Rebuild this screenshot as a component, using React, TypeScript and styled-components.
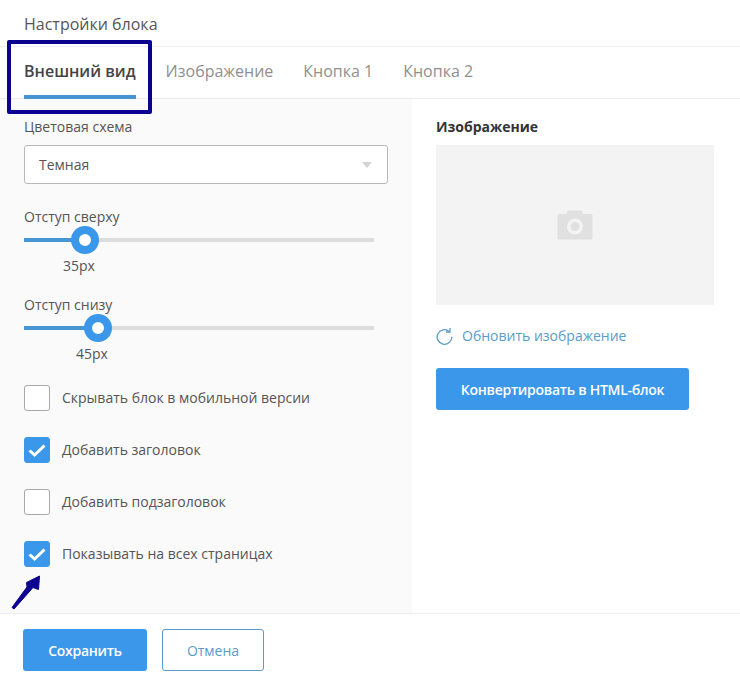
import React from 'react'
import styled, { createGlobalStyle } from 'styled-components'

const GlobalStyle = createGlobalStyle`
  html, body {
    margin: 0;
    padding: 0;
    background: #ffffff;
  }
  body {
    font-family: "Open Sans", "Liberation Sans", sans-serif;
    font-size: 14px;
    color: #555555;
  }
  * {
    box-sizing: border-box;
  }
`

const Page = styled.div`
  position: relative;
  width: 740px;
  height: 674px;
  display: flex;
  flex-direction: column;
  overflow: hidden;
  background: #ffffff;
`

const Header = styled.div`
  height: 47px;
  padding: 13px 24px 0;
  font-size: 16px;
  line-height: 22px;
  color: #555555;
  border-bottom: 1px solid #f0f0f0;
`

const Tabs = styled.div`
  height: 52px;
  display: flex;
  padding-left: 24px;
  gap: 30px;
  border-bottom: 1px solid #ececec;
`

const Tab = styled.div<{ $active?: boolean }>`
  height: 52px;
  padding-top: 13px;
  font-size: 16px;
  line-height: 22px;
  font-weight: ${({ $active }) => ($active ? 600 : 400)};
  color: ${({ $active }) => ($active ? '#444444' : '#8f8f8f')};
  border-bottom: 4px solid ${({ $active }) => ($active ? '#4596d2' : 'transparent')};
`

const Body = styled.div`
  flex: 1;
  display: flex;
  min-height: 0;
`

const LeftColumn = styled.div`
  width: 412px;
  padding: 18px 24px 0;
  background: #fafafa;
`

const RightColumn = styled.div`
  flex: 1;
  padding: 18px 26px 0 24px;
  display: flex;
  flex-direction: column;
  align-items: flex-start;
`

const FieldLabel = styled.div`
  font-size: 14px;
  line-height: 20px;
  color: #555555;
`

const SelectBox = styled.div`
  margin-top: 8px;
  width: 364px;
  height: 39px;
  padding: 0 14px;
  display: flex;
  align-items: center;
  justify-content: space-between;
  background: #ffffff;
  border: 1px solid #b8b8b8;
  border-radius: 3px;
  color: #555555;
`

const Caret = styled.div`
  width: 0;
  height: 0;
  margin-right: 1px;
  border-left: 5.5px solid transparent;
  border-right: 5.5px solid transparent;
  border-top: 6px solid #d4d4d4;
`

const SliderBlock = styled.div`
  margin-top: 23px;
  height: 68px;
  & + & {
    margin-top: 20px;
  }
`

const Track = styled.div`
  position: relative;
  margin-top: 11px;
  width: 350px;
  height: 4px;
  background: #dcdcdc;
`

const TrackFill = styled.div`
  height: 100%;
  background: #4596d2;
`

const Thumb = styled.div`
  position: absolute;
  top: -12px;
  width: 28px;
  height: 28px;
  margin-left: -14px;
  border-radius: 50%;
  background: #ffffff;
  border: 8px solid #3a97ea;
`

const SliderValue = styled.div`
  margin-top: 14px;
  width: 32px;
  text-align: center;
  line-height: 20px;
  white-space: nowrap;
`

const CheckList = styled.div`
  margin-top: 22px;
  display: flex;
  flex-direction: column;
  gap: 26px;
`

const CheckRow = styled.div`
  display: flex;
  align-items: center;
  gap: 12px;
  height: 26px;
  line-height: 20px;
  color: #555555;
`

const CheckBox = styled.div<{ $checked?: boolean }>`
  width: 26px;
  height: 26px;
  display: flex;
  align-items: center;
  justify-content: center;
  border-radius: 3px;
  background: ${({ $checked }) => ($checked ? '#3a97ea' : '#ffffff')};
  border: 1px solid ${({ $checked }) => ($checked ? '#3a97ea' : '#a8a8a8')};
`

const SectionTitle = styled.div`
  font-size: 14px;
  line-height: 20px;
  font-weight: 700;
  color: #333333;
`

const ImagePlaceholder = styled.div`
  margin-top: 8px;
  width: 278px;
  height: 160px;
  display: flex;
  align-items: center;
  justify-content: center;
  background: #f3f3f3;
`

const RefreshLink = styled.div`
  margin-top: 21px;
  display: flex;
  align-items: center;
  gap: 9px;
  line-height: 20px;
  color: #5a9bc9;
`

const ConvertButton = styled.div`
  margin-top: 22px;
  width: 253px;
  height: 42px;
  display: flex;
  align-items: center;
  justify-content: center;
  border-radius: 3px;
  background: #3a97ea;
  color: #ffffff;
  font-weight: 600;
  letter-spacing: -0.27px;
`

const Footer = styled.div`
  height: 61px;
  padding: 15px 23px 0;
  display: flex;
  align-items: flex-start;
  gap: 15px;
  border-top: 1px solid #efefef;
`

const SaveButton = styled.div`
  width: 124px;
  height: 42px;
  display: flex;
  align-items: center;
  justify-content: center;
  border-radius: 3px;
  background: #3a97ea;
  color: #ffffff;
  font-weight: 600;
  letter-spacing: -0.3px;
`

const CancelButton = styled.div`
  width: 102px;
  height: 42px;
  display: flex;
  align-items: center;
  justify-content: center;
  border-radius: 3px;
  background: #ffffff;
  border: 1px solid #5a9bc9;
  color: #5a9bc9;
`

const Highlight = styled.div`
  position: absolute;
  left: 7px;
  top: 40px;
  width: 145px;
  height: 74px;
  border: 4px solid #0c0091;
  border-radius: 2px;
`

const ArrowMark = styled.svg`
  position: absolute;
  left: 0;
  top: 565px;
`

const Check = () => (
  <svg width="18" height="13" viewBox="0 0 18 13">
    <path d="M1.5 6.5 L6.6 11 L16.5 1.5" fill="none" stroke="#ffffff" strokeWidth="3" />
  </svg>
)

const CameraIcon = () => (
  <svg width="36" height="30" viewBox="0 0 36 30">
    <path
      fillRule="evenodd"
      fill="#e0e0e0"
      d="M2 4 H9 L11 0.5 H24 L26 4 H34 Q35.5 4 35.5 5.5 V28 Q35.5 29.5 34 29.5 H2 Q0.5 29.5 0.5 28 V5.5 Q0.5 4 2 4 Z M18 8.5 A8 8 0 1 0 18 24.5 A8 8 0 1 0 18 8.5 Z M18 12 A4.5 4.5 0 1 1 18 21 A4.5 4.5 0 1 1 18 12 Z"
    />
  </svg>
)

const RefreshIcon = () => (
  <svg width="17" height="18" viewBox="0 0 17 18">
    <path d="M13.2 4.4 A7.3 7.3 0 1 0 15.8 9.8" fill="none" stroke="#5a9bc9" strokeWidth="1.3" />
    <path d="M14 1 V5 H10" fill="none" stroke="#5a9bc9" strokeWidth="1.3" />
  </svg>
)

const Slider = ({ label, value, percent, valueLeft }: { label: string; value: string; percent: number; valueLeft: number }) => (
  <SliderBlock>
    <FieldLabel>{label}</FieldLabel>
    <Track>
      <TrackFill style={{ width: `${percent}%` }} />
      <Thumb style={{ left: `${percent}%` }} />
    </Track>
    <SliderValue style={{ marginLeft: valueLeft }}>{value}</SliderValue>
  </SliderBlock>
)

const checks = [
  { label: 'Скрывать блок в мобильной версии', checked: false },
  { label: 'Добавить заголовок', checked: true },
  { label: 'Добавить подзаголовок', checked: false },
  { label: 'Показывать на всех страницах', checked: true },
]

const App = () => (
  <Page>
    <GlobalStyle />
    <Header>Настройки блока</Header>
    <Tabs>
      <Tab $active>Внешний вид</Tab>
      <Tab>Изображение</Tab>
      <Tab>Кнопка 1</Tab>
      <Tab>Кнопка 2</Tab>
    </Tabs>
    <Body>
      <LeftColumn>
        <FieldLabel>Цветовая схема</FieldLabel>
        <SelectBox>
          Темная
          <Caret />
        </SelectBox>
        <Slider label="Отступ сверху" value="35px" percent={17.5} valueLeft={39} />
        <Slider label="Отступ снизу" value="45px" percent={21.1} valueLeft={52} />
        <CheckList>
          {checks.map((item) => (
            <CheckRow key={item.label}>
              <CheckBox $checked={item.checked}>{item.checked && <Check />}</CheckBox>
              {item.label}
            </CheckRow>
          ))}
        </CheckList>
      </LeftColumn>
      <RightColumn>
        <SectionTitle>Изображение</SectionTitle>
        <ImagePlaceholder>
          <CameraIcon />
        </ImagePlaceholder>
        <RefreshLink>
          <RefreshIcon />
          Обновить изображение
        </RefreshLink>
        <ConvertButton>Конвертировать в HTML-блок</ConvertButton>
      </RightColumn>
    </Body>
    <Footer>
      <SaveButton>Сохранить</SaveButton>
      <CancelButton>Отмена</CancelButton>
    </Footer>
    <Highlight />
    <ArrowMark width="50" height="50" viewBox="0 0 50 50">
      <path
        d="M12 42.5 L27 22 L26.5 17.5 L39.5 11 L38.5 24.5 L33 22.5 L14 44 Z"
        fill="#0c0091"
        stroke="#0c0091"
        strokeWidth="1"
        strokeLinejoin="round"
      />
    </ArrowMark>
  </Page>
)

export default App
